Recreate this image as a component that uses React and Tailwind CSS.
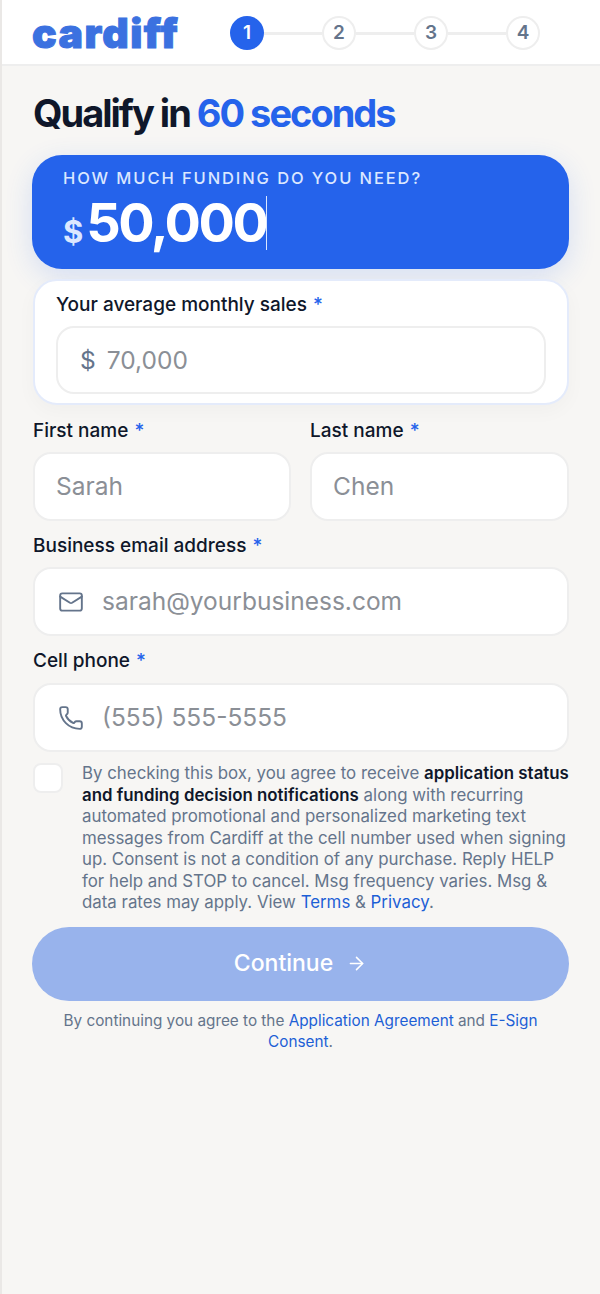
import React from 'react';
import { Mail, Phone, ArrowRight } from 'lucide-react';

const Star = () => <span className="text-[#2563eb] ml-[1px]">*</span>;

const Field = ({ label, className = '', labelClass = 'mb-[9px]', children }) => (
  <div className={className}>
    <div className={`text-[19px] leading-[26px] font-medium text-[#0f172a] ${labelClass}`}>
      {label} <Star />
    </div>
    {children}
  </div>
);

const InputBox = ({ icon, placeholder }) => (
  <div className="h-[69px] bg-white rounded-[18px] border-2 border-[#eeeeee] flex items-center px-[21px]">
    {icon && <span className="w-[26px] ml-[2px] mr-[18px] flex justify-center text-[#64748b]">{icon}</span>}
    <span className="text-[24.5px] text-[#8b8f96]">{placeholder}</span>
  </div>
);

const steps = [1, 2, 3, 4];

export default function App() {
  return (
    <div className="min-h-[1294px] bg-[#f7f6f4] border-l-2 border-[#eae8e6] font-['Inter',sans-serif]">
      {/* Header */}
      <header className="h-[66px] bg-white border-b-2 border-[#eeeeee] flex items-center pl-[30px] pt-[2px]">
        <div className="w-[198px] text-[41px] leading-none font-black text-[#3b71e0] tracking-[1.4px] [-webkit-text-stroke:1px_#3b71e0]">
          cardiff
        </div>
        <div className="flex items-center">
          {steps.map((n, i) => (
            <React.Fragment key={n}>
              {i > 0 && <div className="w-[58px] h-[3px] bg-[#eeeeee]" />}
              <div
                className={
                  n === 1
                    ? 'w-[34px] h-[34px] rounded-full bg-[#2563eb] text-white flex items-center justify-center text-[19px] font-semibold'
                    : 'w-[34px] h-[34px] rounded-full bg-white border-2 border-[#eeeeee] text-[#64748b] flex items-center justify-center text-[19px] font-semibold'
                }
              >
                {n}
              </div>
            </React.Fragment>
          ))}
        </div>
      </header>

      <main className="pl-[30px] pr-[31px]">
        <h1 className="mt-[24px] text-[38px] leading-[46px] font-bold tracking-[-2px] text-[#0f172a] pl-[1px]">
          Qualify in <span className="text-[#2563eb]">60 seconds</span>
        </h1>

        {/* Funding card */}
        <div className="mt-[19px] h-[114px] bg-[#2563eb] rounded-[30px] shadow-[0_8px_28px_rgba(37,99,235,0.16)] pl-[31px] pt-[12px]">
          <div className="text-[16.5px] leading-[22px] font-medium uppercase tracking-[1.9px] text-[#dbe7ff]">
            How much funding do you need?
          </div>
          <div className="flex items-end mt-[5px]">
            <span className="text-[31px] leading-[40px] font-bold text-[#dbe7ff] mr-[3px]">$</span>
            <span className="text-[54px] leading-[58px] font-bold tracking-[-2.5px] text-white">50,000</span>
            <span className="w-[1px] h-[54px] bg-[#dbe7ff] self-center" />
          </div>
        </div>

        {/* Monthly sales card */}
        <div className="mt-[10px] ml-[1px] h-[126px] bg-white rounded-[24px] border-2 border-[#e4ebfb] px-[21px] pt-[11px] shadow-[0_6px_20px_rgba(15,23,42,0.03)]">
          <Field label="Your average monthly sales">
            <div className="h-[68px] rounded-[18px] border-2 border-[#eeeeee] flex items-center px-[22px] -mt-[1px]">
              <span className="text-[24.5px] text-[#64748b] mr-[11px]">$</span>
              <span className="text-[24.5px] text-[#8b8f96]">70,000</span>
            </div>
          </Field>
        </div>

        {/* Names */}
        <div className="mt-[13px] ml-[1px] grid grid-cols-[258px_259px] gap-x-[19px]">
          <Field label="First name" labelClass="mb-[8px]"><InputBox placeholder="Sarah" /></Field>
          <Field label="Last name" labelClass="mb-[8px]"><InputBox placeholder="Chen" /></Field>
        </div>

        <Field label="Business email address" className="mt-[12px] ml-[1px]" labelClass="mb-[8px]">
          <InputBox icon={<Mail size={26} strokeWidth={1.75} />} placeholder="sarah@yourbusiness.com" />
        </Field>

        <Field label="Cell phone" className="mt-[12px] ml-[1px]">
          <InputBox icon={<Phone size={28} strokeWidth={1.75} />} placeholder="(555) 555-5555" />
        </Field>

        {/* Consent */}
        <div className="mt-[11px] ml-[1px] flex">
          <div className="w-[30px] h-[30px] shrink-0 rounded-[8px] bg-white border-2 border-[#eeeeee]" />
          <p className="ml-[19px] text-[16.85px] leading-[21.5px] text-[#64748b] w-[488px]">
            By checking this box, you agree to receive{' '}
            <span className="font-semibold text-[#0f172a]">application status and funding decision notifications</span>{' '}
            along with recurring automated promotional and personalized marketing text messages from Cardiff at the cell
            number used when signing up. Consent is not a condition of any purchase. Reply HELP for help and STOP to
            cancel. Msg frequency varies. Msg &amp; data rates may apply. View{' '}
            <span className="text-[#1d5fd6]">Terms</span> &amp; <span className="text-[#1d5fd6]">Privacy</span>.
          </p>
        </div>

        {/* Continue */}
        <button className="mt-[13px] w-full h-[74px] rounded-full bg-[#98b3ec] text-white flex items-center justify-center gap-[13px] text-[23px] font-medium">
          Continue <ArrowRight size={21} strokeWidth={1.75} />
        </button>

        <p className="mt-[9px] text-center text-[15.3px] leading-[21px] text-[#64748b] px-[28px]">
          By continuing you agree to the <span className="text-[#1d5fd6]">Application Agreement</span> and{' '}
          <span className="text-[#1d5fd6]">E-Sign Consent</span>.
        </p>
      </main>
    </div>
  );
}
